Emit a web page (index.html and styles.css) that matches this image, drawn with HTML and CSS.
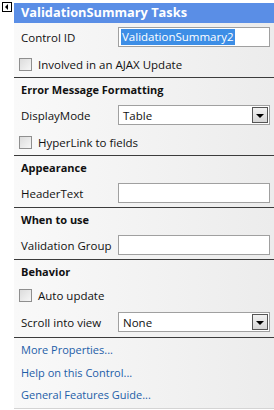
FILE: index.html
```html
<!doctype html>
<html>
    <head>
        <title>ValidationSummary Tasks</title>
        <!-- Style -->
        <link rel="stylesheet" href="styles.css">
    </head>
    <body>
        <div class="shell">
            <div class="toggle">
                <svg width="10" height="10" viewBox="0 0 10 10">
                    <rect x="0.5" y="0.5" width="9" height="9" fill="#fff" stroke="#000"/>
                    <polygon points="3,5 6,2 6,8" fill="#000"/>
                </svg>
            </div>

            <div class="panel">
                <div class="panel-header">ValidationSummary Tasks</div>

                <div class="field">
                    <span class="label">Control ID</span>
                    <div class="textbox"><span class="selected">ValidationSummary2</span></div>
                </div>
                <div class="check-row">
                    <span class="checkbox"></span>
                    <span>Involved in an AJAX Update</span>
                </div>

                <div class="separator"></div>

                <!-- Error Message Formatting -->
                <div class="section-title">Error Message Formatting</div>
                <div class="field">
                    <span class="label">DisplayMode</span>
                    <div class="select">
                        <span class="select-value">Table</span>
                        <span class="drop-btn"><span class="arrow"></span></span>
                    </div>
                </div>
                <div class="check-row">
                    <span class="checkbox"></span>
                    <span>HyperLink to fields</span>
                </div>

                <div class="separator"></div>

                <!-- Appearance -->
                <div class="section-title">Appearance</div>
                <div class="field">
                    <span class="label">HeaderText</span>
                    <div class="textbox"></div>
                </div>

                <div class="separator"></div>

                <!-- When to use -->
                <div class="section-title">When to use</div>
                <div class="field">
                    <span class="label">Validation Group</span>
                    <div class="textbox"></div>
                </div>

                <div class="separator"></div>

                <!-- Behavior -->
                <div class="section-title">Behavior</div>
                <div class="check-row short">
                    <span class="checkbox"></span>
                    <span>Auto update</span>
                </div>
                <div class="field tall">
                    <span class="label">Scroll into view</span>
                    <div class="select">
                        <span class="select-value">None</span>
                        <span class="drop-btn"><span class="arrow"></span></span>
                    </div>
                </div>

                <div class="separator"></div>

                <!-- Links -->
                <div class="links">
                    <a class="task-link">More Properties...</a>
                    <a class="task-link">Help on this Control...</a>
                    <a class="task-link">General Features Guide...</a>
                </div>
            </div>
        </div>
    </body>
</html>
```
FILE: styles.css
```css
body {
    margin: 0;
    background-color: #fff;
    font-family: "Open Sans", "Noto Sans", sans-serif;
    font-size: 11.5px;
    color: #111;
}

.shell {
    display: flex;
    width: 274px;
    height: 410px;
}

.toggle {
    width: 14px;
    padding: 2px 0 0 2px;
    box-sizing: border-box;
}

.toggle svg {
    display: block;
}

.panel {
    flex: 1;
    margin-top: 3px;
    height: 405px;
    background: linear-gradient(to right, #f9f9f9, #ececec);
    border-bottom: 1px solid #d4d4d4;
    display: flex;
    flex-direction: column;
}

.panel-header {
    height: 20px;
    line-height: 19px;
    background-color: #5a8ee6;
    color: #fff;
    font-weight: bold;
    font-size: 12.8px;
    padding-left: 7px;
}

.field {
    display: flex;
    align-items: center;
    height: 28px;
    padding: 0 4px 0 7px;
}

.field:first-of-type {
    height: 29px;
}

.field.tall {
    height: 30px;
}

.label {
    width: 97px;
    flex-shrink: 0;
}

.textbox {
    flex: 1;
    height: 20px;
    border: 1px solid #a0a0a0;
    background-color: #fff;
    box-sizing: border-box;
    display: flex;
    align-items: center;
    padding-left: 2px;
}

.selected {
    background-color: #3d8ee6;
    color: #fff;
    line-height: 16px;
    padding: 0 1px;
}

.select {
    flex: 1;
    height: 20px;
    border: 1px solid #a0a0a0;
    background-color: #fff;
    box-sizing: border-box;
    display: flex;
    align-items: center;
    justify-content: space-between;
    padding: 0 1px 0 4px;
}

.drop-btn {
    width: 14px;
    height: 14px;
    border: 1px solid #555;
    background: linear-gradient(#f2f2f2, #d6d6d6);
    display: flex;
    align-items: center;
    justify-content: center;
}

.arrow {
    width: 0;
    height: 0;
    border-left: 4px solid transparent;
    border-right: 4px solid transparent;
    border-top: 4px solid #000;
    margin-top: 1px;
}

.check-row {
    display: flex;
    align-items: center;
    height: 26px;
    padding-left: 5px;
    gap: 6px;
}

.check-row.short {
    height: 24px;
}

.checkbox {
    width: 13px;
    height: 13px;
    border: 1px solid #8f8f8f;
    background: linear-gradient(135deg, #dcdcdc, #f6f6f6);
    box-sizing: border-box;
}

.separator {
    height: 2px;
    border-top: 1px solid #3c3c3c;
    box-sizing: border-box;
}

.section-title {
    height: 22px;
    line-height: 22px;
    padding-left: 7px;
    font-weight: bold;
    font-size: 11px;
}

.links {
    display: flex;
    flex-direction: column;
    padding-left: 7px;
}

.task-link {
    height: 22.5px;
    line-height: 22px;
    color: #1d5ea8;
    font-size: 11px;
    cursor: pointer;
}
```
